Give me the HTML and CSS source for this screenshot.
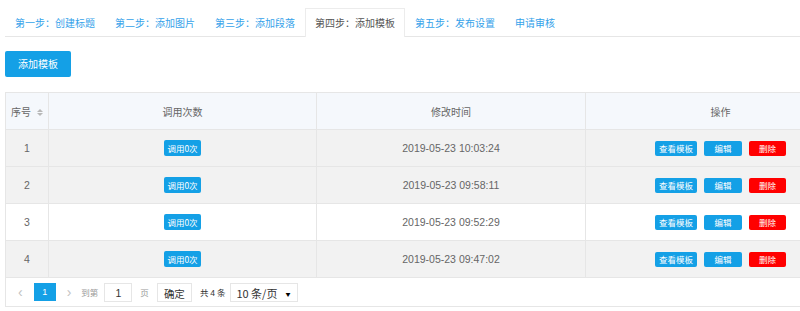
FILE: index.html
```html
<!DOCTYPE html>
<html>
<head>
    <meta charset="utf-8">
    <title>添加模板</title>
    <link rel="stylesheet" href="styles.css">
</head>
<body>
    <div class="page">
        <ul class="tabs">
            <li>第一步：创建标题</li>
            <li>第二步：添加图片</li>
            <li>第三步：添加段落</li>
            <li class="active">第四步：添加模板</li>
            <li>第五步：发布设置</li>
            <li class="short">申请审核</li>
        </ul>

        <div class="toolbar">
            <button class="btn">添加模板</button>
        </div>

        <div class="table-box">
            <table class="grid">
                <colgroup>
                    <col class="col-no">
                    <col class="col-count">
                    <col class="col-time">
                    <col class="col-op">
                </colgroup>
                <thead>
                    <tr>
                        <th class="th-no">序号 <span class="sort"><i class="up"></i><i class="down"></i></span></th>
                        <th>调用次数</th>
                        <th>修改时间</th>
                        <th>操作</th>
                    </tr>
                </thead>
                <tbody>
                    <tr class="gray">
                        <td>1</td>
                        <td><span class="badge">调用0次</span></td>
                        <td>2019-05-23 10:03:24</td>
                        <td><span class="ops"><a class="xs view">查看模板</a><a class="xs edit">编辑</a><a class="xs del">删除</a></span></td>
                    </tr>
                    <tr class="gray">
                        <td>2</td>
                        <td><span class="badge">调用0次</span></td>
                        <td>2019-05-23 09:58:11</td>
                        <td><span class="ops"><a class="xs view">查看模板</a><a class="xs edit">编辑</a><a class="xs del">删除</a></span></td>
                    </tr>
                    <tr>
                        <td>3</td>
                        <td><span class="badge">调用0次</span></td>
                        <td>2019-05-23 09:52:29</td>
                        <td><span class="ops"><a class="xs view">查看模板</a><a class="xs edit">编辑</a><a class="xs del">删除</a></span></td>
                    </tr>
                    <tr class="gray">
                        <td>4</td>
                        <td><span class="badge">调用0次</span></td>
                        <td>2019-05-23 09:47:02</td>
                        <td><span class="ops"><a class="xs view">查看模板</a><a class="xs edit">编辑</a><a class="xs del">删除</a></span></td>
                    </tr>
                </tbody>
            </table>

            <div class="pager">
                <span class="arrow prev">&lsaquo;</span>
                <span class="cur">1</span>
                <span class="arrow next">&rsaquo;</span>
                <span class="label go">到第</span>
                <span class="box num">1</span>
                <span class="label page-word">页</span>
                <span class="box ok">确定</span>
                <span class="label total">共 <b>4</b> 条</span>
                <span class="box limit">10 条/页<i class="caret">▼</i></span>
            </div>
        </div>
    </div>
</body>
</html>
```

FILE: styles.css
```css
:root {
    --blue: #14a0e6;
    --link: #35a2ea;
    --line: #e6e6e6;
    --text: #666;
}

body {
    margin: 0;
    background: #fff;
    font-family: "Noto Sans CJK SC", "Liberation Sans", sans-serif;
    color: var(--text);
}

.page {
    width: 800px;
    height: 311px;
    overflow: hidden;
    padding-left: 5px;
    box-sizing: border-box;
}

/* tabs */
.tabs {
    display: flex;
    list-style: none;
    margin: 8px 0 0 0;
    padding: 0;
    width: 900px;
    height: 28px;
    border-bottom: 1px solid var(--line);
}

.tabs li {
    width: 100px;
    box-sizing: border-box;
    text-align: center;
    line-height: 27px;
    font-size: 10px;
    color: var(--link);
    border: 1px solid transparent;
    border-bottom: none;
}

.tabs li.short {
    width: 60px;
}

.tabs li.active {
    color: #555;
    background: #fff;
    border-color: #ececec;
    height: 29px;
}

/* toolbar */
.toolbar {
    display: flex;
    margin-top: 14px;
}

.btn {
    height: 26px;
    padding: 0 13px;
    border: none;
    border-radius: 2px;
    background: var(--blue);
    color: #fff;
    font-family: inherit;
    font-size: 10px;
    line-height: 26px;
}

/* table */
.table-box {
    margin-top: 15px;
    width: 850px;
}

.grid {
    width: 850px;
    border-collapse: collapse;
    table-layout: fixed;
    font-size: 10px;
}

.col-no { width: 43px; }
.col-count { width: 268px; }
.col-time { width: 269px; }
.col-op { width: 270px; }

.grid th,
.grid td {
    height: 36px;
    padding: 0;
    border: 1px solid var(--line);
    text-align: center;
    font-weight: normal;
    color: var(--text);
}

.grid th {
    background: #f5f8fc;
}

.grid td {
    font-family: "Liberation Sans", "Noto Sans CJK SC", sans-serif;
    font-size: 10.5px;
}

.grid tr.gray td {
    background: #f2f2f2;
}

th.th-no {
    text-align: left;
    padding-left: 5px;
}

.sort {
    display: inline-flex;
    flex-direction: column;
    gap: 1px;
    margin-left: 4px;
    vertical-align: middle;
}

.sort i {
    width: 0;
    height: 0;
    border-left: 3px solid transparent;
    border-right: 3px solid transparent;
}

.sort .up { border-bottom: 3px solid #b8b8b8; }
.sort .down { border-top: 3px solid #b8b8b8; }

.badge {
    display: inline-block;
    width: 37px;
    height: 16px;
    line-height: 16px;
    border-radius: 2px;
    background: var(--blue);
    color: #fff;
    font-family: "Noto Sans CJK SC", sans-serif;
    font-size: 8.5px;
    vertical-align: middle;
}

.ops {
    display: inline-flex;
    gap: 7px;
    vertical-align: middle;
}

.xs {
    display: inline-block;
    height: 15px;
    line-height: 15px;
    border-radius: 2px;
    color: #fff;
    font-family: "Noto Sans CJK SC", sans-serif;
    font-size: 8.5px;
    text-align: center;
}

.xs.view { width: 42px; background: var(--blue); }
.xs.edit { width: 38px; background: var(--blue); }
.xs.del { width: 37px; background: #ff0000; }

/* pager */
.pager {
    display: flex;
    align-items: center;
    height: 28px;
    padding-left: 12px;
    border: 1px solid var(--line);
    border-top: none;
    font-size: 10px;
    color: #333;
}

.arrow {
    color: #c2c2c2;
    font-family: "Liberation Sans", sans-serif;
    font-size: 14px;
    line-height: 18px;
}

.prev { margin-right: 11px; }
.next { margin: 0 10px 0 11px; }

.cur {
    width: 22px;
    height: 18px;
    line-height: 18px;
    text-align: center;
    background: var(--blue);
    color: #fff;
    font-family: "Liberation Sans", sans-serif;
    font-size: 9px;
}

.label {
    color: #999;
    font-size: 8.5px;
}

.box {
    height: 19px;
    line-height: 19px;
    box-sizing: border-box;
    border: 1px solid var(--line);
    text-align: center;
    color: #333;
}

.go { margin-right: 6px; }

.num {
    width: 28px;
    font-family: "Liberation Sans", sans-serif;
    font-size: 10.5px;
}

.page-word { margin: 0 8px; }

.ok {
    width: 35px;
    font-size: 10.5px;
}

.total {
    margin: 0 5px 0 8px;
    color: #333;
    word-spacing: 0;
}

.total b {
    font-weight: normal;
    font-family: "Liberation Sans", sans-serif;
}

.limit {
    position: relative;
    width: 68px;
    text-align: left;
    padding-left: 5px;
    font-size: 11px;
}

.caret {
    position: absolute;
    right: 7px;
    top: 0;
    font-style: normal;
    font-size: 5px;
    color: #000;
}
```
